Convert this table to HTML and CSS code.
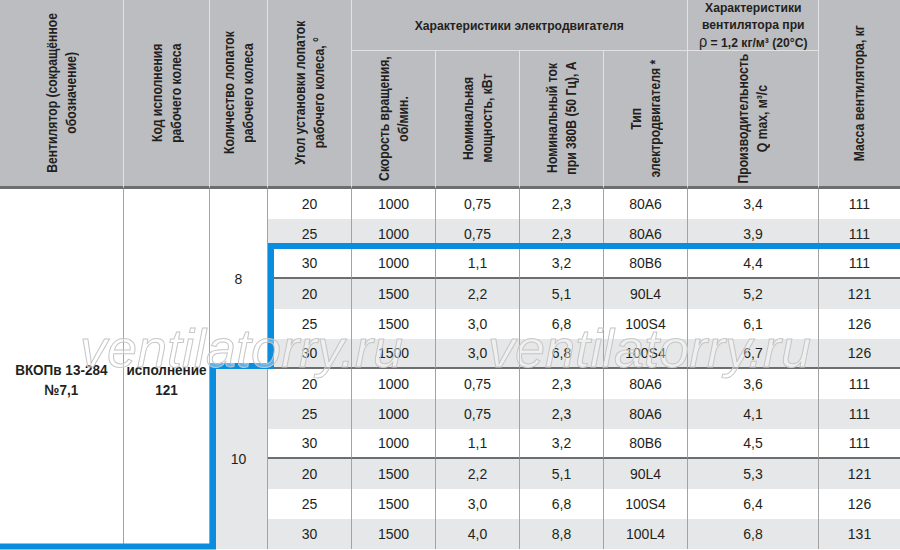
FILE: index.html
```html
<!DOCTYPE html>
<html lang="ru">
<head>
<meta charset="utf-8">
<title>ВКОПв 13-284 №7,1</title>
<link rel="stylesheet" href="styles.css">
</head>
<body>
<div class="sheet">
  <div class="grid">
    <div class="h tall"><span class="vt">Вентилятор (сокращённое<br>обозначение)</span></div>
    <div class="h tall"><span class="vt">Код исполнения<br>рабочего колеса</span></div>
    <div class="h tall"><span class="vt">Количество лопаток<br>рабочего колеса</span></div>
    <div class="h tall"><span class="vt">Угол установки лопаток<br>рабочего колеса, °</span></div>
    <div class="h group wide"><span class="ht">Характеристики электродвигателя</span></div>
    <div class="h group"><span class="ht">Характеристики<br>вентилятора при<br><span class="rho">ρ</span> = 1,2 кг/м³ (20°С)</span></div>
    <div class="h tall last"><span class="vt">Масса вентилятора, кг</span></div>
    <div class="h sub"><span class="vt">Скорость вращения,<br>об/мин.</span></div>
    <div class="h sub"><span class="vt">Номинальная<br>мощность, кВт</span></div>
    <div class="h sub"><span class="vt">Номинальный ток<br>при 380В (50 Гц), А</span></div>
    <div class="h sub"><span class="vt">Тип<br>электродвигателя *</span></div>
    <div class="h sub"><span class="vt">Производительность<br>Q max, м³/с</span></div>

    <div class="c name"><span class="bt">ВКОПв 13-284<br>№7,1</span></div>
    <div class="c name"><span class="bt">исполнение<br>121</span></div>
    <div class="c blades">8</div>

    <div class="c">20</div><div class="c">1000</div><div class="c">0,75</div><div class="c">2,3</div><div class="c">80A6</div><div class="c">3,4</div><div class="c e">111</div>
    <div class="c g">25</div><div class="c g">1000</div><div class="c g">0,75</div><div class="c g">2,3</div><div class="c g">80A6</div><div class="c g">3,9</div><div class="c g e">111</div>
    <div class="c sep">30</div><div class="c sep">1000</div><div class="c sep">1,1</div><div class="c sep">3,2</div><div class="c sep">80B6</div><div class="c sep">4,4</div><div class="c sep e">111</div>
    <div class="c g">20</div><div class="c g">1500</div><div class="c g">2,2</div><div class="c g">5,1</div><div class="c g">90L4</div><div class="c g">5,2</div><div class="c g e">121</div>
    <div class="c">25</div><div class="c">1500</div><div class="c">3,0</div><div class="c">6,8</div><div class="c">100S4</div><div class="c">6,1</div><div class="c e">126</div>
    <div class="c g sep">30</div><div class="c g sep">1500</div><div class="c g sep">3,0</div><div class="c g sep">6,8</div><div class="c g sep">100S4</div><div class="c g sep">6,7</div><div class="c g sep e">126</div>

    <div class="c blades g">10</div>
    <div class="c">20</div><div class="c">1000</div><div class="c">0,75</div><div class="c">2,3</div><div class="c">80A6</div><div class="c">3,6</div><div class="c e">111</div>
    <div class="c g">25</div><div class="c g">1000</div><div class="c g">0,75</div><div class="c g">2,3</div><div class="c g">80A6</div><div class="c g">4,1</div><div class="c g e">111</div>
    <div class="c sep">30</div><div class="c sep">1000</div><div class="c sep">1,1</div><div class="c sep">3,2</div><div class="c sep">80B6</div><div class="c sep">4,5</div><div class="c sep e">111</div>
    <div class="c g">20</div><div class="c g">1500</div><div class="c g">2,2</div><div class="c g">5,1</div><div class="c g">90L4</div><div class="c g">5,3</div><div class="c g e">121</div>
    <div class="c">25</div><div class="c">1500</div><div class="c">3,0</div><div class="c">6,8</div><div class="c">100S4</div><div class="c">6,4</div><div class="c e">126</div>
    <div class="c g">30</div><div class="c g">1500</div><div class="c g">4,0</div><div class="c g">8,8</div><div class="c g">100L4</div><div class="c g">6,8</div><div class="c g e">131</div>
  </div>

  <svg class="hl" width="900" height="550" viewBox="0 0 900 550" aria-hidden="true">
    <polyline points="0,546.5 213,546.5 213,366 271,366 271,246 900,246"/>
  </svg>

  <span class="wm wm1">ventilatorry.ru</span>
  <span class="wm wm2">ventilatorry.ru</span>
</div>
</body>
</html>
```

FILE: styles.css
```css
html, body {
  margin: 0;
  padding: 0;
  background: #ffffff;
}

body {
  font-family: "Liberation Sans", Arial, sans-serif;
  color: #231f20;
}

.sheet {
  position: relative;
  width: 900px;
  height: 550px;
  overflow: hidden;
}

.grid {
  display: grid;
  grid-template-columns: 124px 86px 58px 84px 84px 84px 84px 84px 131px 81px;
  grid-template-rows: 51px 138px repeat(12, 30px);
}

.grid > div {
  box-sizing: border-box;
  display: flex;
  align-items: center;
  justify-content: center;
}

/* header */
.h {
  background: #bcbdc0;
  border-right: 1px solid #e2e2e3;
  color: #231f20;
  font-weight: bold;
}

.tall {
  grid-row: span 2;
  border-bottom: 3px solid #6d6e70;
}

.sub {
  border-bottom: 3px solid #6d6e70;
}

.wide {
  grid-column: span 4;
}

.group {
  border-bottom: 1px solid #e2e2e3;
}

.last {
  border-right: none;
}

.vt {
  display: block;
  writing-mode: vertical-rl;
  transform: rotate(180deg) scaleY(0.87);
  white-space: nowrap;
  text-align: center;
  font-size: 14px;
  line-height: 19px;
}

.ht {
  display: block;
  font-size: 13.5px;
  line-height: 17px;
  text-align: center;
  white-space: nowrap;
  transform: scaleX(0.9);
}

.rho {
  font-size: 16px;
  font-weight: normal;
}

/* body */
.c {
  border-right: 1px solid #a3a3a4;
  font-size: 14px;
  background: #ffffff;
}

.c.g {
  background: #e6e7e8;
}

.c.e {
  border-right: none;
}

.c.sep {
  border-bottom: 2px solid #6d6e70;
}

.name {
  grid-row: span 12;
  padding-top: 22px;
}

.bt {
  display: block;
  font-weight: bold;
  font-size: 15px;
  line-height: 20px;
  text-align: center;
  white-space: nowrap;
  transform: scaleX(0.9);
}

.blades {
  grid-row: span 6;
}

/* overlays */
.hl {
  position: absolute;
  left: 0;
  top: 0;
  pointer-events: none;
}

.hl polyline {
  fill: none;
  stroke: #0b8ddf;
  stroke-width: 6;
  stroke-linejoin: miter;
}

.wm {
  position: absolute;
  top: 321px;
  font-family: "Liberation Sans", Arial, sans-serif;
  font-style: italic;
  font-size: 54px;
  line-height: 54px;
  color: rgba(255, 255, 255, 0.35);
  -webkit-text-stroke: 1px #c6c6c6;
  white-space: nowrap;
  pointer-events: none;
}

.wm1 {
  left: 80px;
}

.wm2 {
  left: 488px;
}
```
